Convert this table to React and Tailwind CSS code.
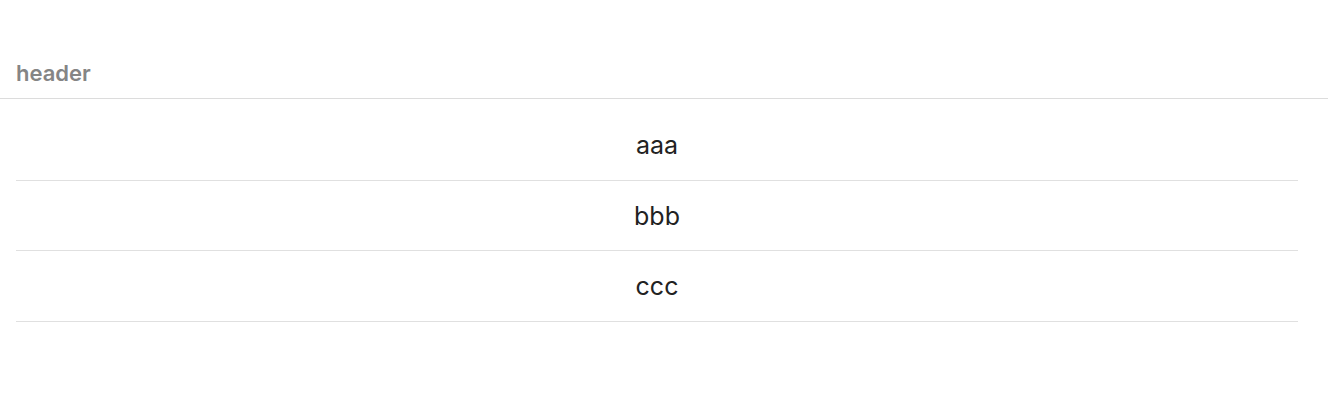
export default function App() {
  const rows = ["aaa", "bbb", "ccc"];
  return (
    <div className="w-[1328px] h-[418px] bg-white" style={{ fontFamily: "Inter, 'Noto Sans', sans-serif" }}>
      <div className="h-[99px] border-b border-[#dcdcdc] flex items-end px-4 pb-[14px]">
        <span className="text-[22px] font-semibold text-[#858585] leading-none">header</span>
      </div>
      <div className="pt-[11px] pl-4 pr-[30px]">
        {rows.map((r) => (
          <div key={r} className="h-[70.5px] border-b border-[#e0e0e0] flex items-center justify-center">
            <span className="text-[25px] text-[#222222] leading-none pt-[2px]">{r}</span>
          </div>
        ))}
      </div>
    </div>
  );
}
